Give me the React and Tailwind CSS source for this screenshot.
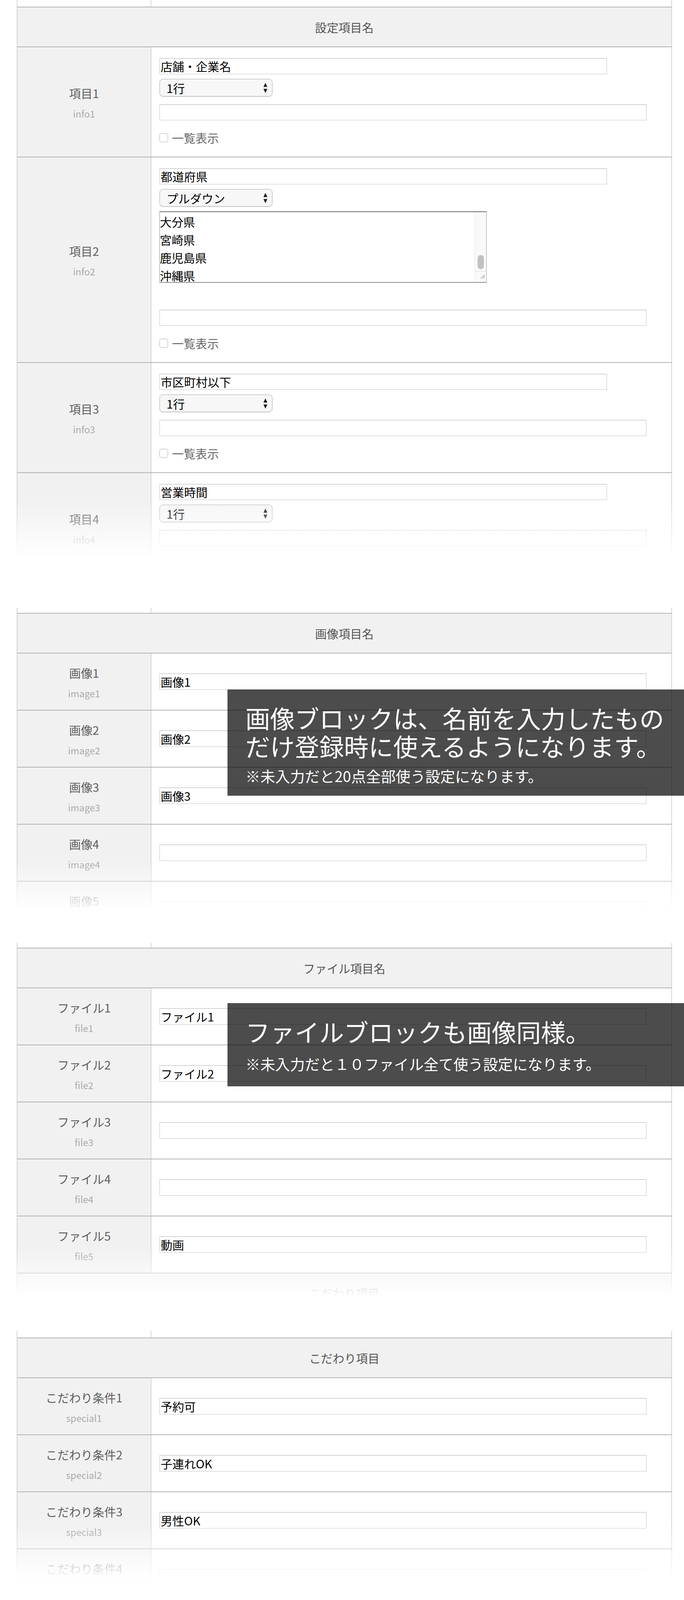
import React from 'react';

// shared line colour for the table borders
const LINE = 'border-[#b4b4b4]';

const Stub = ({ className }) => (
  <div className={`grid grid-cols-[343px_1fr] ${className}`}>
    <div className={`border-r ${LINE}`} />
    <div />
  </div>
);

const Header = ({ title }) => (
  <div className={`flex h-[102px] items-center justify-center border-t-2 ${LINE} bg-[#f1f1f1] text-[30px] text-[#555]`}>
    {title}
  </div>
);

const Row = ({ label, sub, h = 'h-[146px]', top = false, children }) => (
  <div className={`grid grid-cols-[343px_1fr] border-t-2 ${LINE} ${h}`}>
    <div className={`flex flex-col items-center justify-center border-r ${LINE} bg-[#f1f1f1]`}>
      <div className="text-[30px] leading-[45px] text-[#5f5f5f]">{label}</div>
      <div className="mt-[15px] text-[24px] leading-[30px] text-[#aaa]">{sub}</div>
    </div>
    <div className={top ? 'pl-[21px]' : 'flex items-center pl-[21px]'}>{children}</div>
  </div>
);

const Input = ({ value = '', w = 'w-[1246px]', h = 'h-[42px]' }) => (
  <input
    readOnly
    defaultValue={value}
    className={`block ${w} ${h} border border-[#c4c4c4] border-t-[#b8b8b8] bg-white px-[2px] text-[30px] text-black shadow-[inset_0_1px_1px_rgba(0,0,0,0.06)] outline-none`}
  />
);

const Select = ({ label }) => (
  <div className="mt-[12px] flex h-[45px] w-[289px] items-center justify-between rounded-[9px] border border-[#a6a6a6] bg-[#f7f7f7] pl-[17px] pr-[11px] shadow-[0_1px_0_rgba(0,0,0,0.1)]">
    <span className="text-[30px] leading-none text-black">{label}</span>
    <svg width="12" height="28" viewBox="0 0 12 28">
      <path d="M6 1 L11 11.5 H1 Z" fill="#1a1a1a" />
      <path d="M6 27 L11 16.5 H1 Z" fill="#1a1a1a" />
    </svg>
  </div>
);

// scrolled multi-line box under 項目2
const ListBox = () => (
  <div className="mt-[12px] flex h-[183px] w-[837px] overflow-hidden border-t-2 border-r border-b-2 border-l border-t-[#6f6f6f] border-r-[#9a9a9a] border-b-[#8e8e8e] border-l-[#8a8a8a] bg-white">
    <div className="flex-1 pt-[1px] text-[30px] leading-[46px] text-black">
      <div>大分県</div>
      <div>宮崎県</div>
      <div>鹿児島県</div>
      <div>沖縄県</div>
    </div>
    <div className="flex w-[30px] flex-col items-center border-l border-[#e6e6e6] bg-[#f9f9f9]">
      <div className="mt-[110px] h-[36px] w-[16px] rounded-full bg-[#c1c1c1]" />
      <div className="mt-[5px] w-full border-t border-[#dedede]" />
      <svg className="mt-[5px] ml-auto mr-[3px]" width="14" height="14" viewBox="0 0 14 14">
        <path d="M13 3 L3 13 M13 8 L8 13" stroke="#8a8a8a" strokeWidth="1.2" fill="none" />
      </svg>
    </div>
  </div>
);

const Checkbox = ({ checked, focus }) => {
  if (!checked) {
    return <span className="block h-[23px] w-[22px] shrink-0 rounded-[5px] border border-[#a8a8a8] bg-white" />;
  }
  return (
    <span className={`flex h-[23px] w-[22px] shrink-0 items-center justify-center rounded-[5px] bg-[#3b86f7] ${focus ? 'ring-[3px] ring-[#9fc4f9]' : ''}`}>
      <svg width="22" height="23" viewBox="0 0 22 23">
        <path d="M6.5 12.5 L9.5 17 L15.5 6" fill="none" stroke="#fff" strokeWidth="2" strokeLinecap="round" strokeLinejoin="round" />
      </svg>
    </span>
  );
};

const ItemRow = ({ label, sub, value, select, list }) => (
  <Row label={label} sub={sub} h={list ? 'h-[526px]' : 'h-[282px]'} top>
    <div className="pt-[28px]">
      <Input value={value} w="w-[1145px]" h="h-[41px]" />
      <Select label={select} />
      {list && <ListBox />}
      <div className={list ? 'mt-[69px]' : 'mt-[20px]'}>
        <Input w="w-[1246px]" h="h-[41px]" />
      </div>
      <div className="mt-[33px] flex items-center">
        <Checkbox />
        <span className="ml-[10px] text-[30px] leading-[23px] text-[#666]">一覧表示</span>
      </div>
    </div>
  </Row>
);

const InputRow = ({ label, sub, value }) => (
  <Row label={label} sub={sub}>
    <Input value={value} />
  </Row>
);

const UseRow = ({ label, sub, checked, focus }) => (
  <Row label={label} sub={sub}>
    <div className="flex items-center">
      <Checkbox checked={checked} focus={focus} />
      <span className="ml-[3px] text-[30px] leading-[45px] text-[#555]">使用する</span>
    </div>
  </Row>
);

const Fade = ({ className }) => (
  <div className={`pointer-events-none absolute inset-x-0 bg-linear-to-b from-white/0 to-white ${className}`} />
);

const useRows = [
  ['並べ替え表示', 'use_order', false],
  ['緯度経度表示', 'use_map', true],
  ['PDF表示', 'use_pdf', false],
  ['新着表示', 'use_new', false],
  ['オプション選択肢表示', 'use_recommend', true],
  ['こだわり表示', 'use_special', true],
  ['閲覧数表示', 'use_count', false],
];

const otherRows = [
  ['プレビュー', 'edit_preview'],
  ['コピー登録', 'edit_copy'],
  ['一覧検索', 'list_search'],
  ['CSV出力', 'list_csv'],
];

export default function App() {
  return (
    <div className="relative w-[1750px] bg-white pb-[44px] font-['Noto_Sans_CJK_JP','Noto_Sans',sans-serif]">
      {/* 設定項目名 */}
      <div className="relative h-[1430px] overflow-hidden">
        <div className={`ml-[43px] w-[1676px] border-x ${LINE}`}>
          <Stub className="h-[17px]" />
          <Header title="設定項目名" />
          <ItemRow label="項目1" sub="info1" value="店舗・企業名" select="1行" />
          <ItemRow label="項目2" sub="info2" value="都道府県" select="プルダウン" list />
          <ItemRow label="項目3" sub="info3" value="市区町村以下" select="1行" />
          <ItemRow label="項目4" sub="info4" value="営業時間" select="1行" />
        </div>
        <Fade className="top-[1280px] h-[150px]" />
      </div>

      {/* 画像項目名 */}
      <div className="relative mt-[126px] h-[779px] overflow-hidden">
        <div className={`ml-[43px] w-[1676px] border-x ${LINE}`}>
          <Stub className="h-[13px]" />
          <Header title="画像項目名" />
          <InputRow label="画像1" sub="image1" value="画像1" />
          <InputRow label="画像2" sub="image2" value="画像2" />
          <InputRow label="画像3" sub="image3" value="画像3" />
          <InputRow label="画像4" sub="image4" />
          <InputRow label="画像5" sub="image5" />
        </div>
        <Fade className="top-[644px] h-[135px]" />
      </div>

      {/* ファイル項目名 */}
      <div className="relative mt-[79px] h-[906px] overflow-hidden">
        <div className={`ml-[43px] w-[1676px] border-x ${LINE}`}>
          <Stub className="h-[12px]" />
          <Header title="ファイル項目名" />
          <InputRow label="ファイル1" sub="file1" value="ファイル1" />
          <InputRow label="ファイル2" sub="file2" value="ファイル2" />
          <InputRow label="ファイル3" sub="file3" />
          <InputRow label="ファイル4" sub="file4" />
          <InputRow label="ファイル5" sub="file5" value="動画" />
          <Header title="こだわり項目" />
        </div>
        <Fade className="top-[776px] h-[130px]" />
      </div>

      {/* こだわり項目 */}
      <div className="relative mt-[87px] h-[638px] overflow-hidden">
        <div className={`ml-[43px] w-[1676px] border-x ${LINE}`}>
          <Stub className="h-[17px]" />
          <Header title="こだわり項目" />
          <InputRow label="こだわり条件1" sub="special1" value="予約可" />
          <InputRow label="こだわり条件2" sub="special2" value="子連れOK" />
          <InputRow label="こだわり条件3" sub="special3" value="男性OK" />
          <InputRow label="こだわり条件4" sub="special4" />
        </div>
        <Fade className="top-[493px] h-[145px]" />
      </div>

      {/* 入力項目の使用 / その他機能 */}
      <div className="mt-[91px]">
        <div className={`ml-[43px] w-[1676px] border-x border-b-2 ${LINE}`}>
          <Stub className="h-[16px]" />
          <Header title="入力項目の使用" />
          {useRows.map(([label, sub, checked]) => (
            <UseRow key={sub} label={label} sub={sub} checked={checked} />
          ))}
          <Header title="その他機能" />
          {otherRows.map(([label, sub]) => (
            <UseRow key={sub} label={label} sub={sub} checked focus={sub === 'list_csv'} />
          ))}
        </div>
      </div>

      <div className="ml-[43px] mt-[39px] flex w-[1676px] justify-center">
        <button className="h-[90px] w-[602px] rounded-[6px] border border-[#c6c6c6] border-t-[#bdbdbd] bg-linear-to-b from-white to-[#ececec] text-[30px] text-[#333] shadow-[0_5px_7px_rgba(0,0,0,0.13)]">
          保存する
        </button>
      </div>

      {/* 説明の吹き出し */}
      <div className="absolute left-[582px] right-0 top-[1765px] bg-black/70 pb-[29px] pl-[46px] pt-[36px] text-white">
        <p className="text-[63px] leading-[72px]">
          画像ブロックは、名前を入力したもの
          <br />
          だけ登録時に使えるようになります。
        </p>
        <p className="mt-[19px] text-[38px] leading-[44px]">※未入力だと20点全部使う設定になります。</p>
      </div>

      <div className="absolute left-[582px] right-0 top-[2568px] bg-black/70 pb-[36px] pl-[46px] pt-[36px] text-white">
        <p className="text-[63px] leading-[72px]">ファイルブロックも画像同様。</p>
        <p className="mt-[25px] text-[38px] leading-[44px]">※未入力だと１０ファイル全て使う設定になります。</p>
      </div>

      <div className="absolute left-[582px] right-0 top-[4613px] bg-black/70 pb-[36px] pl-[46px] pt-[35px] text-white">
        <p className="text-[63px] leading-[72px]">使いたい機能だけチェックします。</p>
      </div>

      <div className="absolute left-[582px] right-0 top-[5561px] bg-black/70 pb-[34px] pl-[46px] pt-[35px] text-white">
        <p className="text-[63px] leading-[72px]">
          こちらは一通りチェックをしておいて
          <br />
          OKです。
        </p>
      </div>
    </div>
  );
}
